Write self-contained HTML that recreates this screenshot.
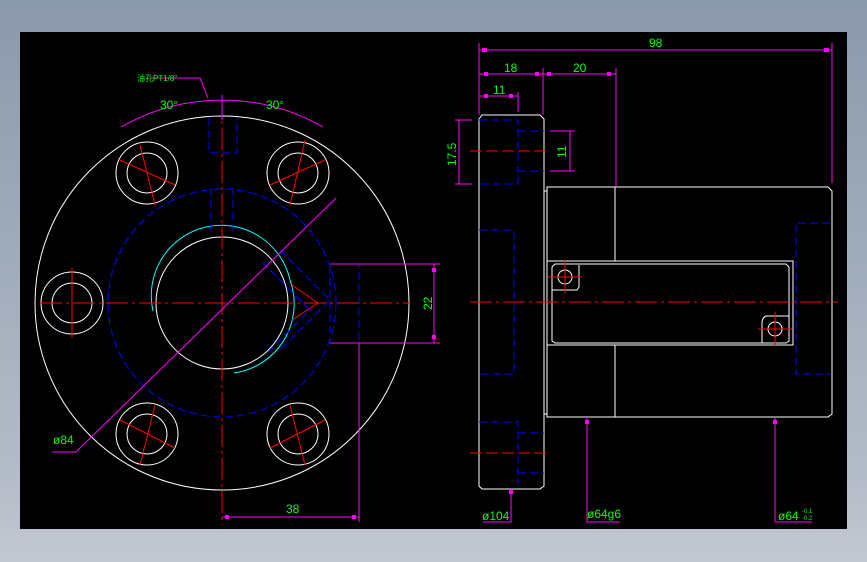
<!DOCTYPE html>
<html><head><meta charset="utf-8"><style>
html,body{margin:0;padding:0;width:867px;height:562px;overflow:hidden;background:linear-gradient(#8a99ab,#b4bcc8 85%,#c4c8d0);}
svg{position:absolute;left:0;top:0}
text{font-family:"Liberation Sans",sans-serif;fill:#00ff00;font-size:12px}
</style></head><body>
<svg width="867" height="562" viewBox="0 0 867 562">
<rect x="20" y="32" width="827" height="497" fill="#000"/>
<g fill="none" stroke-width="1">
<g stroke="#fff">
<circle cx="222" cy="303" r="187"/>
<circle cx="222" cy="303" r="66"/>
<circle cx="147" cy="173" r="31"/><circle cx="147" cy="173" r="20"/>
<circle cx="298" cy="173" r="31"/><circle cx="298" cy="173" r="20"/>
<circle cx="72" cy="303" r="31"/><circle cx="72" cy="303" r="20"/>
<circle cx="147" cy="434" r="31"/><circle cx="147" cy="434" r="20"/>
<circle cx="298" cy="434" r="31"/><circle cx="298" cy="434" r="20"/>
</g>
<path d="M153 311 A70 70 0 0 1 290 280 M290 280 A70 70 0 0 1 234 373" stroke="#00ffff"/>
<g stroke="#0000ff" stroke-dasharray="8 4">
<circle cx="222" cy="303" r="114"/>
<path d="M209 118 V153 H237 V118 M211 188 V233 M233 188 V233"/>
<path d="M330 264 H357 Q359 264 359 267 V340 Q359 343 356 343 H330 V264"/>
<path d="M280 250 L330 300 L280 350 M262 262 L310 310 L265 355"/>
</g>
<g stroke="#ff0000" stroke-dasharray="22 4 3 4">
<path d="M40 303 H410 M222 95 V525"/>
</g>
<g stroke="#ff0000">
<path d="M120 160 L175 185 M140 145 L155 205 M270 185 L325 160 M290 205 L305 140 M72 268 V338 M120 420 L175 448 M155 405 L140 465 M270 448 L325 420 M290 405 L305 465 M292 285 L318 303 L292 320"/>
</g>
<g stroke="#ff00ff">
<path d="M222 95 V120 M121 127 A203 203 0 0 1 323 127"/>
<path d="M336 198 L76 452 H52"/>
<path d="M330 264 H440 M330 343 H440 M434 264 V343"/>
<path d="M359 343 V522 M222 517 H359"/>
<path d="M150 78 H200 L208 98"/>
</g>
<g stroke="#fff">
<path d="M482 115 H540 L544 119 V486 L540 489 H482 L479 486 V119 Z"/>
<path d="M544 191 H547 V414 H544"/>
<path d="M547 187 H828 L832 191 V414 L828 417 H547 Z"/>
<path d="M615 187 V261 M615 345 V417"/>
<rect x="547" y="261" width="246" height="84"/>
<path d="M555 264 H786 L789 267 V341 L786 343 H555 L552 341 V267 Z"/>
<circle cx="565" cy="277" r="7"/><circle cx="775" cy="329" r="7"/>
<path d="M552 290 H577 L579 287 V265 M789 316 H766 Q762 318 762 323 V343"/>
</g>
<g stroke="#0000ff" stroke-dasharray="8 4">
<path d="M479 120 H518 V184 H479 M518 131 H544 M518 171 H544"/>
<path d="M479 230 H514 V374 H479"/>
<path d="M479 422 H518 V485 M518 433 H544 M518 473 H544"/>
<path d="M830 223 H796 V374 H830"/>
</g>
<g stroke="#ff0000" stroke-dasharray="22 4 3 4">
<path d="M470 302 H838"/>
</g>
<g stroke="#ff0000" stroke-dasharray="12 4">
<path d="M470 151 H550 M470 453 H550"/>
</g>
<g stroke="#ff0000">
<path d="M548 277 H582 M565 260 V294 M758 329 H792 M775 312 V346"/>
</g>
<g stroke="#ff00ff">
<path d="M479 43 V115 M832 43 V183 M479 50 H832 M543 68 V115 M616 68 V187 M479 74 H616 M518 92 V112 M479 96 H518"/>
<path d="M455 120 H472 M455 184 H472 M459 120 V184 M550 131 H575 M550 171 H575 M570 131 V171"/>
<path d="M511 489 V522 H483 M587 417 V522 H620 M775 417 V522 H812"/>
</g>
</g>
<g fill="#ff00ff">
<rect x="482" y="48" width="5" height="4"/><rect x="824" y="48" width="5" height="4"/>
<rect x="484" y="72" width="4" height="4"/><rect x="535" y="72" width="4" height="4"/><rect x="547" y="72" width="4" height="4"/><rect x="607" y="72" width="4" height="4"/>
<rect x="484" y="94" width="4" height="4"/><rect x="509" y="94" width="4" height="4"/>
<rect x="225" y="515" width="4" height="4"/><rect x="352" y="515" width="4" height="4"/>
<rect x="432" y="268" width="4" height="4"/><rect x="432" y="335" width="4" height="4"/>
<rect x="509" y="490" width="4" height="4"/><rect x="585" y="420" width="4" height="4"/><rect x="773" y="420" width="4" height="4"/>
</g>
<text x="649" y="47">98</text>
<text x="504" y="72">18</text>
<text x="573" y="72">20</text>
<text x="493" y="94">11</text>
<text x="286" y="513">38</text>
<text x="53" y="444">ø84</text>
<text x="160" y="109">30°</text>
<text x="266" y="109">30°</text>
<text x="137" y="81" style="font-size:8px">油孔PT1/8"</text>
<text x="482" y="520">ø104</text>
<text x="587" y="518">ø64g6</text>
<text x="778" y="520">ø64</text>
<text x="802" y="513" style="font-size:6px">-0.1</text>
<text x="802" y="520" style="font-size:6px">-0.2</text>
<text transform="translate(432,310) rotate(-90)">22</text>
<text transform="translate(456,166) rotate(-90)">17.5</text>
<text transform="translate(566,158) rotate(-90)">11</text>
</svg>
</body></html>
